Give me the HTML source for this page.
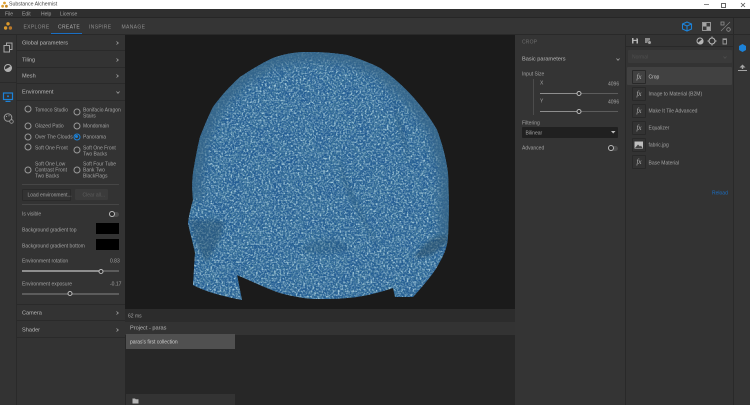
<!DOCTYPE html>
<html><head><meta charset="utf-8"><style>
html,body{margin:0;padding:0;background:#2b2b2b}
#a{position:relative;width:750px;height:405px;overflow:hidden;background:#323232;font-family:"Liberation Sans",sans-serif;font-size:5px;color:#a2a2a2;filter:blur(.3px)}
#a div{position:absolute}
.t{white-space:nowrap;line-height:6px;transform:translateY(-2.5px)}
.h{font-size:5.6px;color:#b8b8b8}
.s{height:1px;background:#2a2a2a}
.l{height:1px;background:#464646}
.r{width:5px;height:5px;border:1px solid #989898;border-radius:50%;transform:translate(-3.5px,-3.5px)}
.tr{height:1.5px;background:#5c5c5c}
.tf{height:1.5px;background:#8e8e8e}
.k{width:3px;height:3px;border:1px solid #bbb;border-radius:50%;background:#2c2c2c;transform:translate(-2.5px,-2px)}
.tg{width:10px;height:5px;border-radius:3px;background:#4c4c4c}
.tg div{left:0;top:-.5px;width:4px;height:4px;border:1px solid #bbb;border-radius:50%;background:#2c2c2c}
.fx{left:632px;width:12px;height:12px;border:1px solid #292929;border-radius:1px;font:italic 7px "Liberation Serif",serif;color:#b8b8b8;text-align:center;line-height:12px}
svg{position:absolute;overflow:visible}
</style></head><body><div id="a">
<div style="left:0;top:0;width:750px;height:9px;background:#fff"></div>
<div style="left:0;top:9px;width:750px;height:9px;background:#2f2f2f"></div>
<div style="left:0;top:17px;width:750px;height:1px;background:#262626"></div>
<div style="left:0;top:18px;width:750px;height:17px;background:#353535"></div>
<div style="left:0;top:34px;width:750px;height:1px;background:#292929"></div>

<svg style="left:1px;top:1px" width="7" height="7" viewBox="0 0 7 7"><circle cx="3.500" cy="2" r="1.400" fill="#e0a030"/><circle cx="1.600" cy="5.200" r="1.400" fill="#e0a030"/><circle cx="5.400" cy="5.200" r="1.400" fill="#c98a25"/></svg>
<div class="t" style="left:9px;top:4px;color:#444;font-size:5.200px">Substance Alchemist</div>
<div style="left:704px;top:4px;width:5px;height:1px;background:#888"></div>
<div style="left:721px;top:3px;width:3px;height:3px;border:1px solid #666"></div>
<svg style="left:740px;top:2px" width="6" height="6" viewBox="0 0 6 6"><path d="M1 1L5 5M5 1L1 5" stroke="#555" stroke-width=".8"/></svg>

<div class="t" style="left:5px;top:13.500px">File</div>
<div class="t" style="left:22px;top:13.500px">Edit</div>
<div class="t" style="left:41px;top:13.500px">Help</div>
<div class="t" style="left:60px;top:13.500px">License</div>

<svg style="left:3px;top:21px" width="10" height="10" viewBox="0 0 10 10"><circle cx="5" cy="2.800" r="1.700" fill="#dc9a2c"/><circle cx="2.600" cy="7" r="1.700" fill="#dc9a2c"/><circle cx="7.400" cy="7" r="1.700" fill="#b9782a"/></svg>
<div class="t" style="left:23.500px;top:26.500px;letter-spacing:.35px;color:#8e8e8e">EXPLORE</div>
<div class="t" style="left:58px;top:26.500px;letter-spacing:.35px;color:#b0b0b0">CREATE</div>
<div class="t" style="left:89px;top:26.500px;letter-spacing:.35px;color:#8e8e8e">INSPIRE</div>
<div class="t" style="left:121.500px;top:26.500px;letter-spacing:.35px;color:#8e8e8e">MANAGE</div>
<div style="left:51px;top:33px;width:31px;height:1px;background:#1a6fc4"></div>

<svg style="left:681px;top:21px" width="12" height="11" viewBox="0 0 12 11"><path d="M6 1L10.500 3V8L6 10L1.500 8V3ZM1.500 3L6 5L10.500 3M6 5V10" fill="none" stroke="#1c82d8" stroke-width="1.100"/></svg>
<svg style="left:702px;top:22px" width="9" height="9" viewBox="0 0 9 9"><rect x=".5" y=".5" width="8" height="8" fill="#3a3a3a" stroke="#949494"/><rect x="1" y="1" width="3.500" height="3.500" fill="#a5a5a5"/><rect x="4.500" y="4.500" width="3.500" height="3.500" fill="#a5a5a5"/></svg>
<svg style="left:720px;top:21px" width="11" height="11" viewBox="0 0 11 11"><path d="M1 10L10 1" stroke="#808080" stroke-width=".7"/><rect x="1" y="1" width="3" height="3" fill="none" stroke="#909090" stroke-width=".8"/><circle cx="8.500" cy="8.500" r="1.800" fill="none" stroke="#909090" stroke-width=".8"/></svg>

<!-- left rail -->
<div style="left:0;top:35px;width:16px;height:370px;background:#333"></div>
<div style="left:16px;top:35px;width:1px;height:370px;background:#2a2a2a"></div>
<div class="l" style="left:0;top:82px;width:16px;background:#2a2a2a"></div>
<svg style="left:3px;top:42px" width="10" height="11" viewBox="0 0 10 11"><rect x="3.500" y="1" width="5.500" height="6.500" fill="none" stroke="#a5a5a5"/><rect x="1" y="3.500" width="5.500" height="6.500" fill="#333" stroke="#a5a5a5"/></svg>
<svg style="left:3px;top:63px" width="10" height="10" viewBox="0 0 10 10"><circle cx="5" cy="5" r="3.500" fill="#333" stroke="#b0b0b0"/><path d="M5 5L8 2.800A3.500 3.500 0 0 1 5 8.500A3.500 3.500 0 0 1 1.800 6.500Z" fill="#b0b0b0"/></svg>
<svg style="left:2px;top:92px" width="12" height="11" viewBox="0 0 12 11"><rect x="1.500" y="1" width="9" height="6.500" fill="none" stroke="#1c82d8" stroke-width="1.200"/><rect x="3.500" y="8.800" width="5" height="1.200" fill="#1c82d8"/><circle cx="6" cy="4.200" r="1" fill="#1c82d8"/></svg>
<svg style="left:2px;top:112px" width="12" height="12" viewBox="0 0 12 12"><circle cx="6" cy="5.500" r="3.800" fill="none" stroke="#999"/><circle cx="9.500" cy="9.500" r="1.800" fill="#333" stroke="#999" stroke-width=".8"/><circle cx="4.500" cy="4.500" r=".6" fill="#999"/><circle cx="7" cy="3.800" r=".6" fill="#999"/></svg>

<!-- left panel -->
<div style="left:17px;top:35px;width:108px;height:370px;background:#333"></div>
<div class="t h" style="left:22px;top:43px">Global parameters</div>
<div class="t h" style="left:22px;top:59.500px">Tiling</div>
<div class="t h" style="left:22px;top:75.500px">Mesh</div>
<div class="t h" style="left:22px;top:92px">Environment</div>
<svg style="left:116px;top:41px" width="3" height="4"><path d="M.5 .5L2.300 2L.5 3.500" fill="none" stroke="#aaa" stroke-width=".7"/></svg>
<svg style="left:116px;top:57.500px" width="3" height="4"><path d="M.5 .5L2.300 2L.5 3.500" fill="none" stroke="#aaa" stroke-width=".7"/></svg>
<svg style="left:116px;top:73.500px" width="3" height="4"><path d="M.5 .5L2.300 2L.5 3.500" fill="none" stroke="#aaa" stroke-width=".7"/></svg>
<svg style="left:115.500px;top:90.500px" width="4" height="3"><path d="M.5 .5L2 2.300L3.500 .5" fill="none" stroke="#aaa" stroke-width=".7"/></svg>
<div class="s" style="left:17px;top:50px;width:108px"></div>
<div class="s" style="left:17px;top:67px;width:108px"></div>
<div class="s" style="left:17px;top:83px;width:108px"></div>
<div class="s" style="left:17px;top:100px;width:108px"></div>

<div class="r" style="left:28px;top:109px"></div><div class="t" style="left:35px;top:109.500px">Tomoco Studio</div>
<div class="r" style="left:76.500px;top:111.500px"></div><div class="t" style="left:83px;top:109.500px">Bonifacio Aragon<br>Stairs</div>
<div class="r" style="left:28px;top:125.500px"></div><div class="t" style="left:35px;top:126px">Glazed Patio</div>
<div class="r" style="left:76.500px;top:125.500px"></div><div class="t" style="left:83px;top:126px">Mondomain</div>
<div class="r" style="left:28px;top:136.500px"></div><div class="t" style="left:35px;top:136.500px">Over The Clouds</div>
<div class="r" style="left:76.500px;top:136.500px;border-color:#1c82d8"></div><div style="left:75px;top:135px;width:3px;height:3px;border-radius:50%;background:#1c82d8"></div><div class="t" style="left:83px;top:136.500px">Panorama</div>
<div class="r" style="left:28px;top:147px"></div><div class="t" style="left:35px;top:147.500px">Soft One Front</div>
<div class="r" style="left:76.500px;top:150px"></div><div class="t" style="left:83px;top:147.500px">Soft One Front<br>Two Backs</div>
<div class="r" style="left:28px;top:169.500px"></div><div class="t" style="left:35px;top:164px">Soft One Low<br>Contrast Front<br>Two Backs</div>
<div class="r" style="left:76.500px;top:169.500px"></div><div class="t" style="left:83px;top:164px">Soft Four Tube<br>Bank Two<br>BlackFlags</div>
<div class="l" style="left:22px;top:184px;width:97px"></div>
<div style="left:22px;top:189px;width:47px;height:10px;border:1px solid #2a2a2a;border-radius:1px"></div>
<div class="t" style="left:27.500px;top:195px">Load environment...</div>
<div style="left:75px;top:189px;width:33px;height:11px;background:#3b3b3b;border-radius:1px"></div>
<div class="t" style="left:82.500px;top:195px;color:#5e5e5e">Clear all...</div>
<div class="l" style="left:22px;top:204px;width:97px"></div>
<div class="t" style="left:22px;top:214px">Is visible</div>
<div class="tg" style="left:109px;top:211.500px"><div></div></div>
<div class="t" style="left:22px;top:229.500px">Background gradient top</div>
<div style="left:96px;top:223px;width:23px;height:11px;background:#000"></div>
<div class="t" style="left:22px;top:245.500px">Background gradient bottom</div>
<div style="left:96px;top:239px;width:23px;height:11px;background:#000"></div>
<div class="t" style="left:22px;top:260.500px">Environment rotation</div>
<div class="t" style="left:110px;top:260.500px">0.83</div>
<div class="tr" style="left:22px;top:270px;width:97px"></div><div class="tf" style="left:22px;top:270px;width:78px"></div><div class="k" style="left:100.500px;top:270.500px"></div>
<div class="t" style="left:22px;top:283.500px">Environment exposure</div>
<div class="t" style="left:110px;top:283.500px">-0.17</div>
<div class="tr" style="left:22px;top:293px;width:97px"></div><div class="k" style="left:69.500px;top:293px"></div>
<div class="s" style="left:17px;top:304px;width:108px"></div>
<div class="t h" style="left:22px;top:313px">Camera</div>
<div class="s" style="left:17px;top:320px;width:108px"></div>
<div class="t h" style="left:22px;top:329.500px">Shader</div>
<div class="s" style="left:17px;top:337px;width:108px"></div>
<svg style="left:116px;top:311px" width="3" height="4"><path d="M.5 .5L2.300 2L.5 3.500" fill="none" stroke="#aaa" stroke-width=".7"/></svg>
<svg style="left:116px;top:327.500px" width="3" height="4"><path d="M.5 .5L2.300 2L.5 3.500" fill="none" stroke="#aaa" stroke-width=".7"/></svg>

<!-- viewport -->
<div style="left:125px;top:35px;width:390px;height:274px;background:#1b1b1b"></div>
<svg style="left:0;top:0" width="750" height="405" viewBox="0 0 750 405">
<defs>
<filter id="n" x="0" y="0" width="100%" height="100%" color-interpolation-filters="sRGB">
<feTurbulence type="fractalNoise" baseFrequency="0.55 0.55" numOctaves="2" seed="4" result="f"/>
<feColorMatrix in="f" type="matrix" values="0 0 0 0 .66  0 0 0 0 .8  0 0 0 0 .86  2 2 0 0 -1.850"/>
<feGaussianBlur stdDeviation=".3"/>
</filter>
<filter id="d" x="0" y="0" width="100%" height="100%" color-interpolation-filters="sRGB">
<feTurbulence type="fractalNoise" baseFrequency="0.6" numOctaves="2" seed="12"/>
<feColorMatrix type="matrix" values="0 0 0 0 .1  0 0 0 0 .33  0 0 0 0 .58  2.600 0 0 0 -1.050"/>
<feGaussianBlur stdDeviation=".25"/>
</filter>
<filter id="m" x="0" y="0" width="100%" height="100%" color-interpolation-filters="sRGB">
<feTurbulence type="fractalNoise" baseFrequency="0.07" numOctaves="2" seed="9"/>
<feColorMatrix type="matrix" values="0 0 0 0 .16  0 0 0 0 .38  0 0 0 0 .58  2.200 0 0 0 -.85"/>
</filter>
<filter id="b5" x="-20%" y="-20%" width="140%" height="140%"><feGaussianBlur stdDeviation="5"/></filter>
<filter id="b2" x="-30%" y="-30%" width="160%" height="160%"><feGaussianBlur stdDeviation="1.800"/></filter>
<clipPath id="cl"><path d="M307 52C320 52 335 53 347 55C360 59 370 63 380 68C392 76 403 86 413 97C422 107 431 119 437 130C442 143 446 158 448 173C449 195 449 216 448 237C447 250 442 258 437 267C430 278 421 288 413 297L395 297L393 288C378 293 362 297 347 298C335 299 325 299 313 299C302 298 291 296 280 293C271 290 262 286 253 282L237 275L242 300C232 298 223 296 213 293C206 291 199 288 193 285L195 253C193 243 190 233 188 223C189 215 191 207 193 200C192 190 192 182 193 173C195 161 197 149 200 137C204 127 208 117 213 107C221 96 230 86 240 77C251 70 262 63 273 58C284 54 295 52 307 52Z"/></clipPath>
</defs>
<g clip-path="url(#cl)">
<rect x="180" y="45" width="280" height="260" fill="#3b7399"/>
<rect x="180" y="45" width="280" height="260" filter="url(#m)"/>
<rect x="180" y="45" width="280" height="260" filter="url(#d)"/>
<rect x="180" y="45" width="280" height="260" filter="url(#n)"/>
<path d="M193 200L193 173L200 137L213 107L240 77L273 58L307 52L347 55L380 68L413 97L437 130L448 173L449 237" fill="none" stroke="#376688" stroke-width="18" filter="url(#b5)" opacity=".85"/>
<g filter="url(#b2)" fill="#2c5a7d" opacity=".35">
<path d="M391 92L398 130L412 170L404 130Z"/>
<path d="M337 155L350 185L375 240L378 250L345 190Z"/>
<path d="M310 243C330 235 345 240 350 250C335 255 310 255 300 250Z"/>
</g>
<path d="M189 218C205 222 218 218 224 222C222 240 212 255 206 262C198 250 192 235 189 218Z" fill="#2a5573" opacity=".5" filter="url(#b2)"/>
<path d="M449 235C432 235 422 245 414 258C425 258 437 255 449 240Z" fill="#2a5068" opacity=".55" filter="url(#b2)"/>
</g>

<!-- viewport icons -->
<rect x="464" y="312" width="7" height="6" rx=".5" fill="#989898"/><path d="M471 315L474 313V318L471 316Z" fill="#989898"/>
<circle cx="482" cy="315" r="3" fill="none" stroke="#909090" stroke-width="1"/>
<circle cx="495.500" cy="315" r="3.200" fill="none" stroke="#909090" stroke-width="1"/><circle cx="495.500" cy="315" r="1.200" fill="#909090"/>
<circle cx="508.500" cy="315" r="3.400" fill="none" stroke="#909090" stroke-width="1"/><path d="M508.500 315L511 313A3.400 3.400 0 0 1 508 318Z" fill="#909090"/>
</svg>

<!-- bottom -->
<div style="left:125px;top:309px;width:390px;height:13px;background:#2c2c2c"></div>
<div class="t" style="left:128px;top:315.500px">62 ms</div>
<div style="left:125px;top:322px;width:390px;height:13px;background:#333"></div>
<div class="t h" style="left:130px;top:328px">Project - paras</div>
<div style="left:125px;top:335px;width:390px;height:70px;background:#272727"></div>
<div style="left:126px;top:334px;width:109px;height:15px;background:#505050"></div>
<div class="t" style="left:130px;top:342px;color:#cfcfcf">paras's first collection</div>
<div style="left:126px;top:394px;width:109px;height:11px;background:#333"></div>
<svg style="left:132px;top:398px" width="7" height="6" viewBox="0 0 7 6"><path d="M.5 .5H3L3.800 1.300H6.500V5.500H.5Z" fill="#b5b5b5"/></svg>

<!-- right panels -->
<div style="left:515px;top:35px;width:110px;height:370px;background:#343434"></div>
<div style="left:625px;top:35px;width:1px;height:370px;background:#292929"></div>
<div style="left:626px;top:35px;width:108px;height:370px;background:#333"></div>
<div style="left:733px;top:18px;width:1px;height:387px;background:#292929"></div>
<div style="left:734px;top:35px;width:16px;height:370px;background:#343434"></div>
<div style="left:626px;top:46px;width:107px;height:1px;background:#292929"></div>

<div class="t" style="left:522px;top:42px;color:#6e6e6e;letter-spacing:.2px">CROP</div>
<div class="t h" style="left:522px;top:58.500px">Basic parameters</div>
<svg style="left:615.500px;top:57.500px" width="4" height="3"><path d="M.5 .5L2 2.300L3.500 .5" fill="none" stroke="#aaa" stroke-width=".7"/></svg>
<div class="t" style="left:522px;top:73.500px">Input Size</div>
<div style="left:533px;top:79px;width:1px;height:36px;background:#4c4c4c"></div>
<div class="t" style="left:540px;top:82.500px">X</div>
<div class="t" style="left:608px;top:83.500px">4096</div>
<div class="tr" style="left:540px;top:92.500px;width:78px"></div><div class="tf" style="left:540px;top:92.500px;width:39px"></div><div class="k" style="left:579px;top:93px"></div>
<div class="t" style="left:540px;top:100.500px">Y</div>
<div class="t" style="left:608px;top:101.500px">4096</div>
<div class="tr" style="left:540px;top:110.500px;width:78px"></div><div class="tf" style="left:540px;top:110.500px;width:39px"></div><div class="k" style="left:579px;top:111px"></div>
<div class="t" style="left:522px;top:122.500px">Filtering</div>
<div style="left:522px;top:127px;width:96px;height:11px;background:#202020;border-radius:1px"></div>
<div class="t" style="left:525.500px;top:132.500px">Bilinear</div>
<svg style="left:611px;top:131px" width="5" height="3"><path d="M0 0H4.500L2.200 2.500Z" fill="#bbb"/></svg>
<div class="t" style="left:522px;top:148px">Advanced</div>
<div class="tg" style="left:608px;top:145.500px"><div></div></div>

<!-- fx toolbar -->
<svg style="left:0;top:0" width="750" height="405" viewBox="0 0 750 405">
<path d="M632 38H637L638 39V43.500H632Z" fill="#b5b5b5"/><rect x="633.500" y="38" width="3" height="1.800" fill="#333"/><rect x="633.500" y="41" width="3" height="2.500" fill="#333"/>
<rect x="645" y="38" width="5" height="5" fill="#8a8a8a"/><circle cx="649.500" cy="42.500" r="1.800" fill="#a0a0a0" stroke="#333" stroke-width=".5"/>
<circle cx="700" cy="41" r="3" fill="#333" stroke="#b5b5b5"/><path d="M700 41L702.300 39A3 3 0 0 1 699 44L697.800 43Z" fill="#b5b5b5"/>
<circle cx="712" cy="41" r="3" fill="none" stroke="#b5b5b5" stroke-width="1.100"/><path d="M712 36.500V38M712 44V45.500M707.500 41H709M715 41H716.500" stroke="#b5b5b5"/>
<path d="M722.500 38.800H727M723 39.500V44H726.500V39.500Z" fill="none" stroke="#9a9a9a" stroke-width=".9"/>
<path d="M742.500 44L746 46V50L742.500 52L739 50V46Z" fill="#1c82d8"/>
<path d="M742.500 64.500L745.500 67.500H743.200V69H741.800V67.500H739.500Z" fill="#a5a5a5"/><rect x="738" y="70" width="9" height="1" fill="#a5a5a5"/>
</svg>

<div style="left:628px;top:50px;width:104px;height:13px;background:#3a3a3a;border-radius:1px"></div>
<div class="t" style="left:632px;top:57px;color:#505050">Normal</div>
<svg style="left:723px;top:55.500px" width="4" height="3"><path d="M.5 .5L2 2.300L3.500 .5" fill="none" stroke="#505050" stroke-width=".7"/></svg>

<div style="left:627px;top:67px;width:105px;height:18px;background:#414141;border-radius:1px"></div>
<div class="fx" style="top:70px">fx</div><div class="t" style="left:648.500px;top:76.500px;color:#c8c8c8">Crop</div>
<div class="fx" style="top:87px">fx</div><div class="t" style="left:648.500px;top:94px">Image to Material (B2M)</div>
<div class="fx" style="top:104px">fx</div><div class="t" style="left:648.500px;top:111px">Make It Tile Advanced</div>
<div class="fx" style="top:121px">fx</div><div class="t" style="left:648.500px;top:128px">Equalizer</div>
<div class="fx" style="top:138px"></div>
<svg style="left:634px;top:141px" width="10" height="8" viewBox="0 0 10 8"><rect x=".5" y=".5" width="8.500" height="7" fill="#bfbfbf"/><path d="M1 7L4 3.500L6 5.500L7 4.500L8.500 7Z" fill="#444"/></svg>
<div class="t" style="left:648.500px;top:145px">fabric.jpg</div>
<div class="fx" style="top:155px">fx</div><div class="t" style="left:648.500px;top:162.500px">Base Material</div>
<div class="t" style="left:712px;top:193px;color:#1a6fc4">Reload</div>
</div></body></html>
